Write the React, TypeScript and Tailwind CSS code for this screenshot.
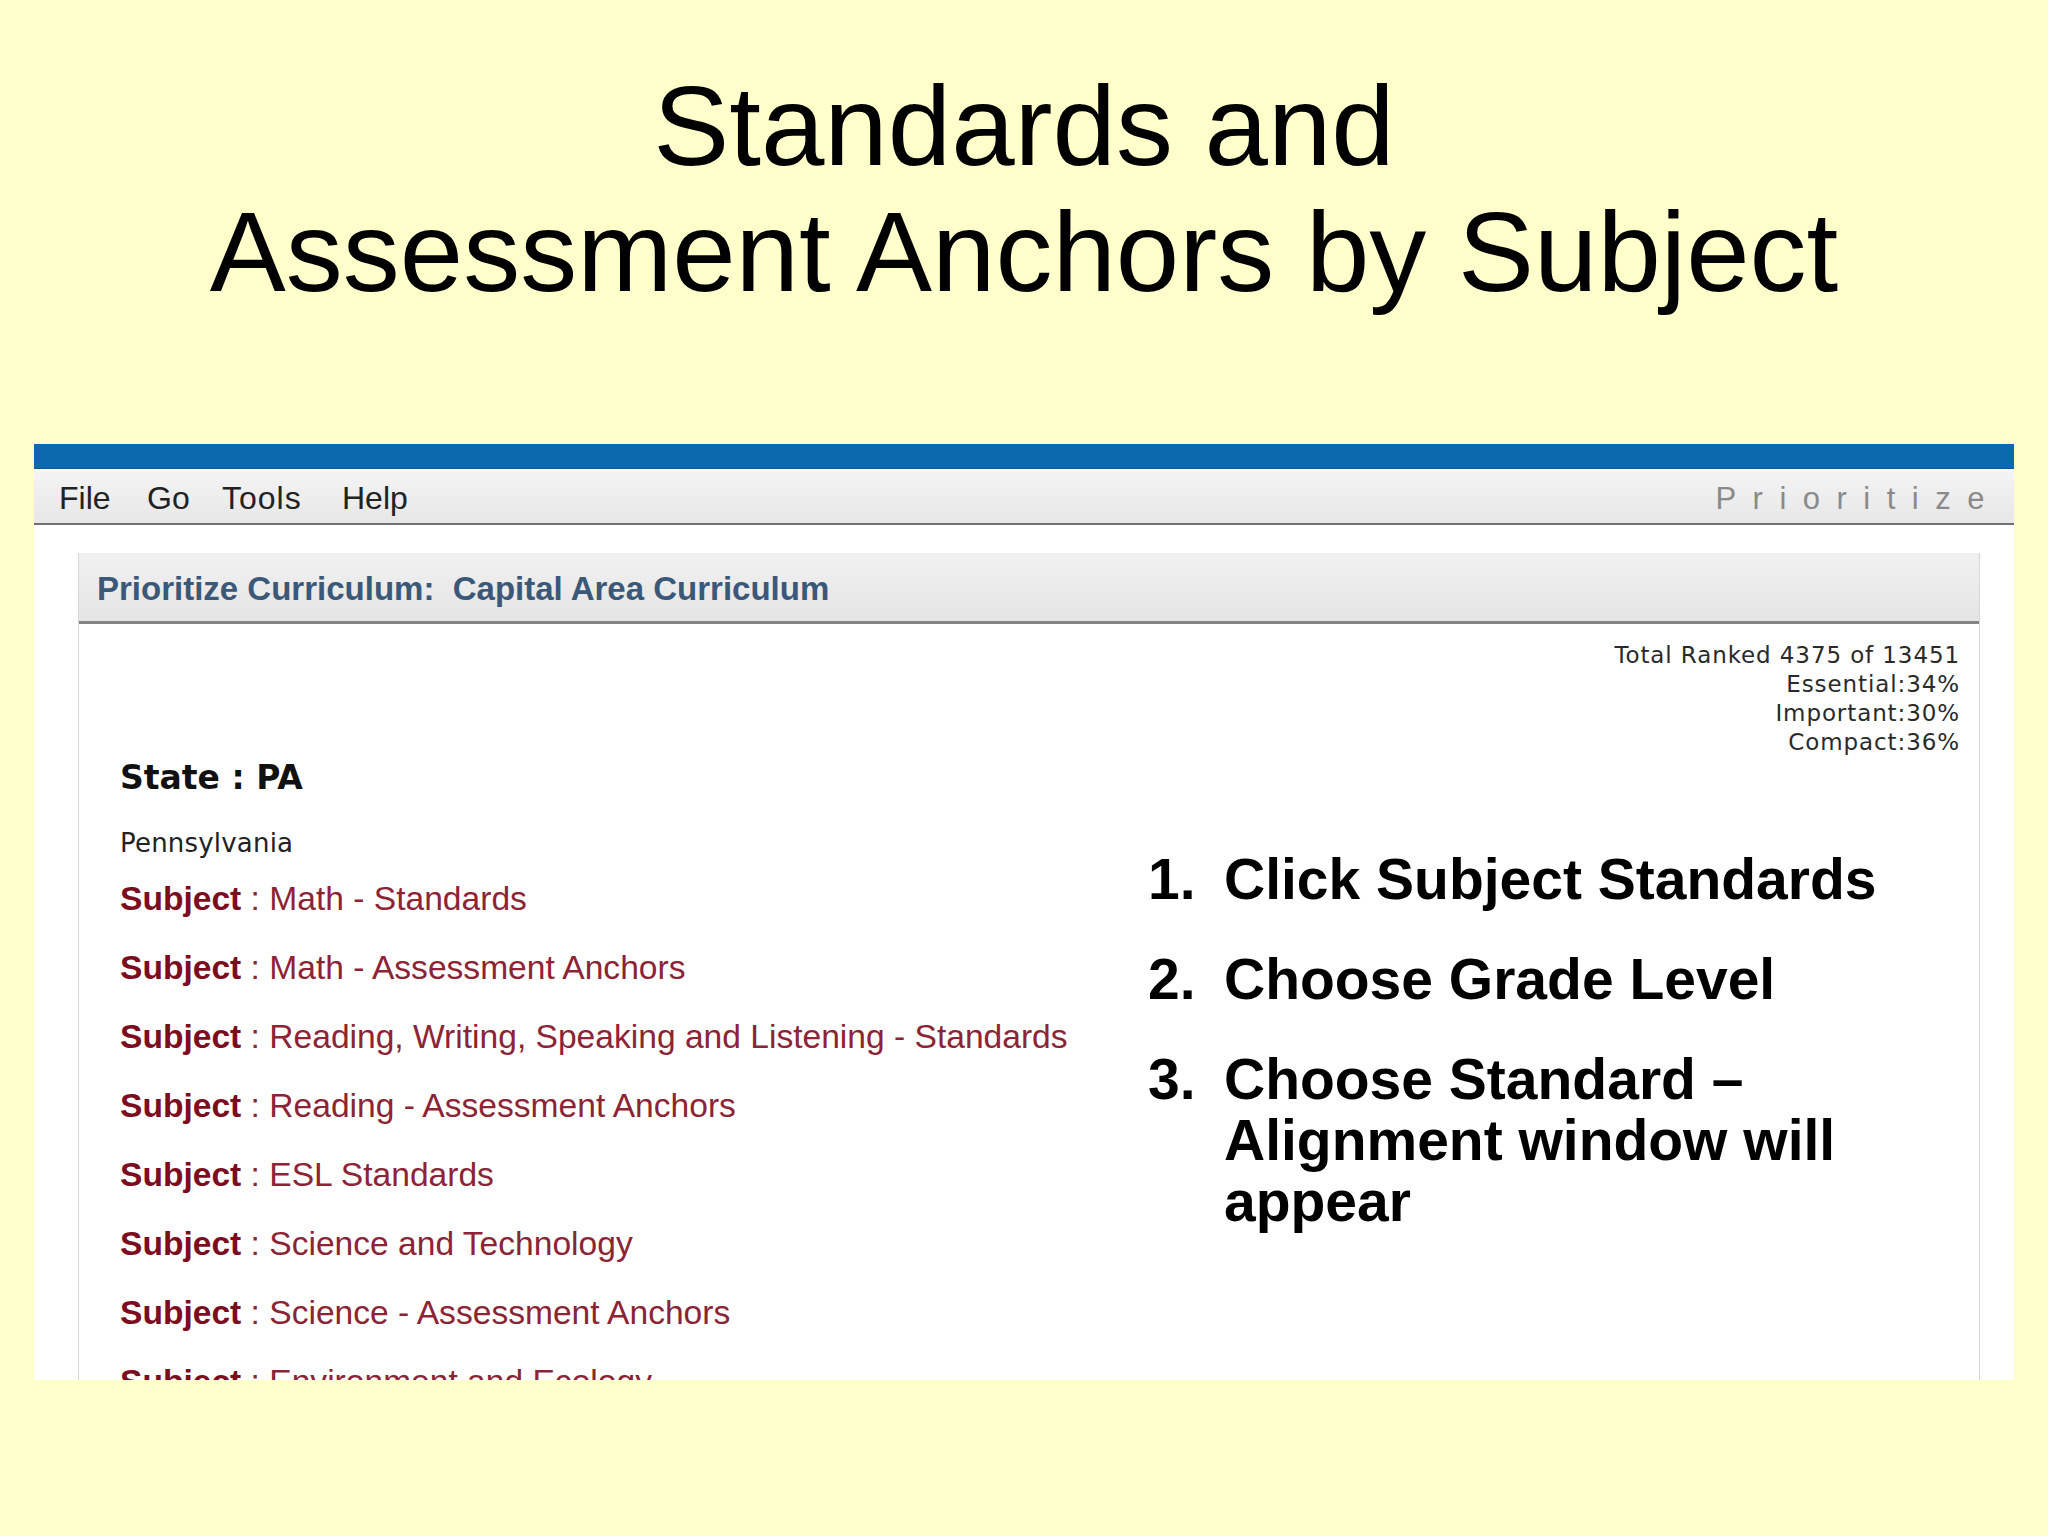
import React from "react";

const subjects = [
  "Math - Standards",
  "Math - Assessment Anchors",
  "Reading, Writing, Speaking and Listening - Standards",
  "Reading - Assessment Anchors",
  "ESL Standards",
  "Science and Technology",
  "Science - Assessment Anchors",
  "Environment and Ecology",
];

const steps = [
  { n: "1.", text: "Click Subject Standards" },
  { n: "2.", text: "Choose Grade Level" },
  { n: "3.", text: "Choose Standard \u2013 Alignment window will appear" },
];

export default function App() {
  return (
    <div className="w-[2048px] h-[1536px] overflow-hidden bg-[#ffffcc] font-['Liberation_Sans',Arial,sans-serif]">
      {/* slide title */}
      <h1 className="pt-[63px] text-center text-[114px] leading-[126px] font-normal text-black">
        Standards and
        <br />
        Assessment Anchors by Subject
      </h1>

      {/* app screenshot */}
      <div className="mx-[34px] mt-[129px] h-[936px] overflow-hidden bg-white">
        <div className="h-[25px] bg-[#0c69ad] border-b border-[#0a5a94]" />
        <div className="h-[2px] bg-[#f7fbff]" />
        <div className="flex h-[54px] items-center justify-between border-b-2 border-[#707070] bg-gradient-to-b from-[#f4f4f4] to-[#e7e7e7] pl-[25px] pr-[13px] pt-[2px]">
          <div className="flex text-[32px] leading-[37px] text-[#222]">
            <span className="w-[88px]">File</span>
            <span className="w-[75px]">Go</span>
            <span className="w-[120px] tracking-[1px]">Tools</span>
            <span>Help</span>
          </div>
          <span className="text-[31px] leading-[37px] tracking-[16.5px] text-[#8a8a8a]">Prioritize</span>
        </div>

        <div className="ml-[44px] mr-[34px] mt-[28px] h-[900px] border-x border-[#d6d6d6] bg-white">
          <div className="flex h-[71px] items-center border-b-[3px] border-[#858585] bg-gradient-to-b from-[#f1f1f1] to-[#e5e5e5] pl-[18px] pt-[3px]">
            <span className="text-[33px] leading-[38px] font-bold text-[#3b5878] whitespace-pre">
              Prioritize Curriculum:  Capital Area Curriculum
            </span>
          </div>

          <div className="pt-[17px]">
            <div className="pr-[19px] text-right font-['DejaVu_Sans',Verdana,sans-serif] text-[23px] leading-[29px] tracking-[0.9px] text-[#2a2a2a]">
              <div>Total Ranked 4375 of 13451</div>
              <div>Essential:34%</div>
              <div>Important:30%</div>
              <div>Compact:36%</div>
            </div>

            <div className="mt-[1px] flex">
              <div className="w-[1069px] shrink-0 pl-[41px]">
                <div className="font-['DejaVu_Sans',Verdana,sans-serif] text-[33px] leading-[40px] font-bold text-[#111]">
                  State : PA
                </div>
                <div className="mt-[28px] font-['DejaVu_Sans',Verdana,sans-serif] text-[26px] leading-[34px] tracking-[0.2px] text-[#222]">
                  Pennsylvania
                </div>
                <div className="mt-[4px]">
                  {subjects.map((s) => (
                    <div key={s} className="h-[69px] text-[33.6px] leading-[69px] whitespace-nowrap">
                      <span className="font-bold text-[#7b0d1e]">Subject</span>
                      <span className="text-[#8c2435]"> : {s}</span>
                    </div>
                  ))}
                </div>
              </div>

              <div className="w-[810px] pt-[91px]">
                <div className="flex flex-col gap-[39px]">
                  {steps.map((st) => (
                    <div key={st.n} className="flex text-[57px] leading-[61px] font-bold text-black">
                      <span className="w-[76px] shrink-0">{st.n}</span>
                      <span className="w-[700px]">{st.text}</span>
                    </div>
                  ))}
                </div>
              </div>
            </div>
          </div>
        </div>
      </div>
    </div>
  );
}
